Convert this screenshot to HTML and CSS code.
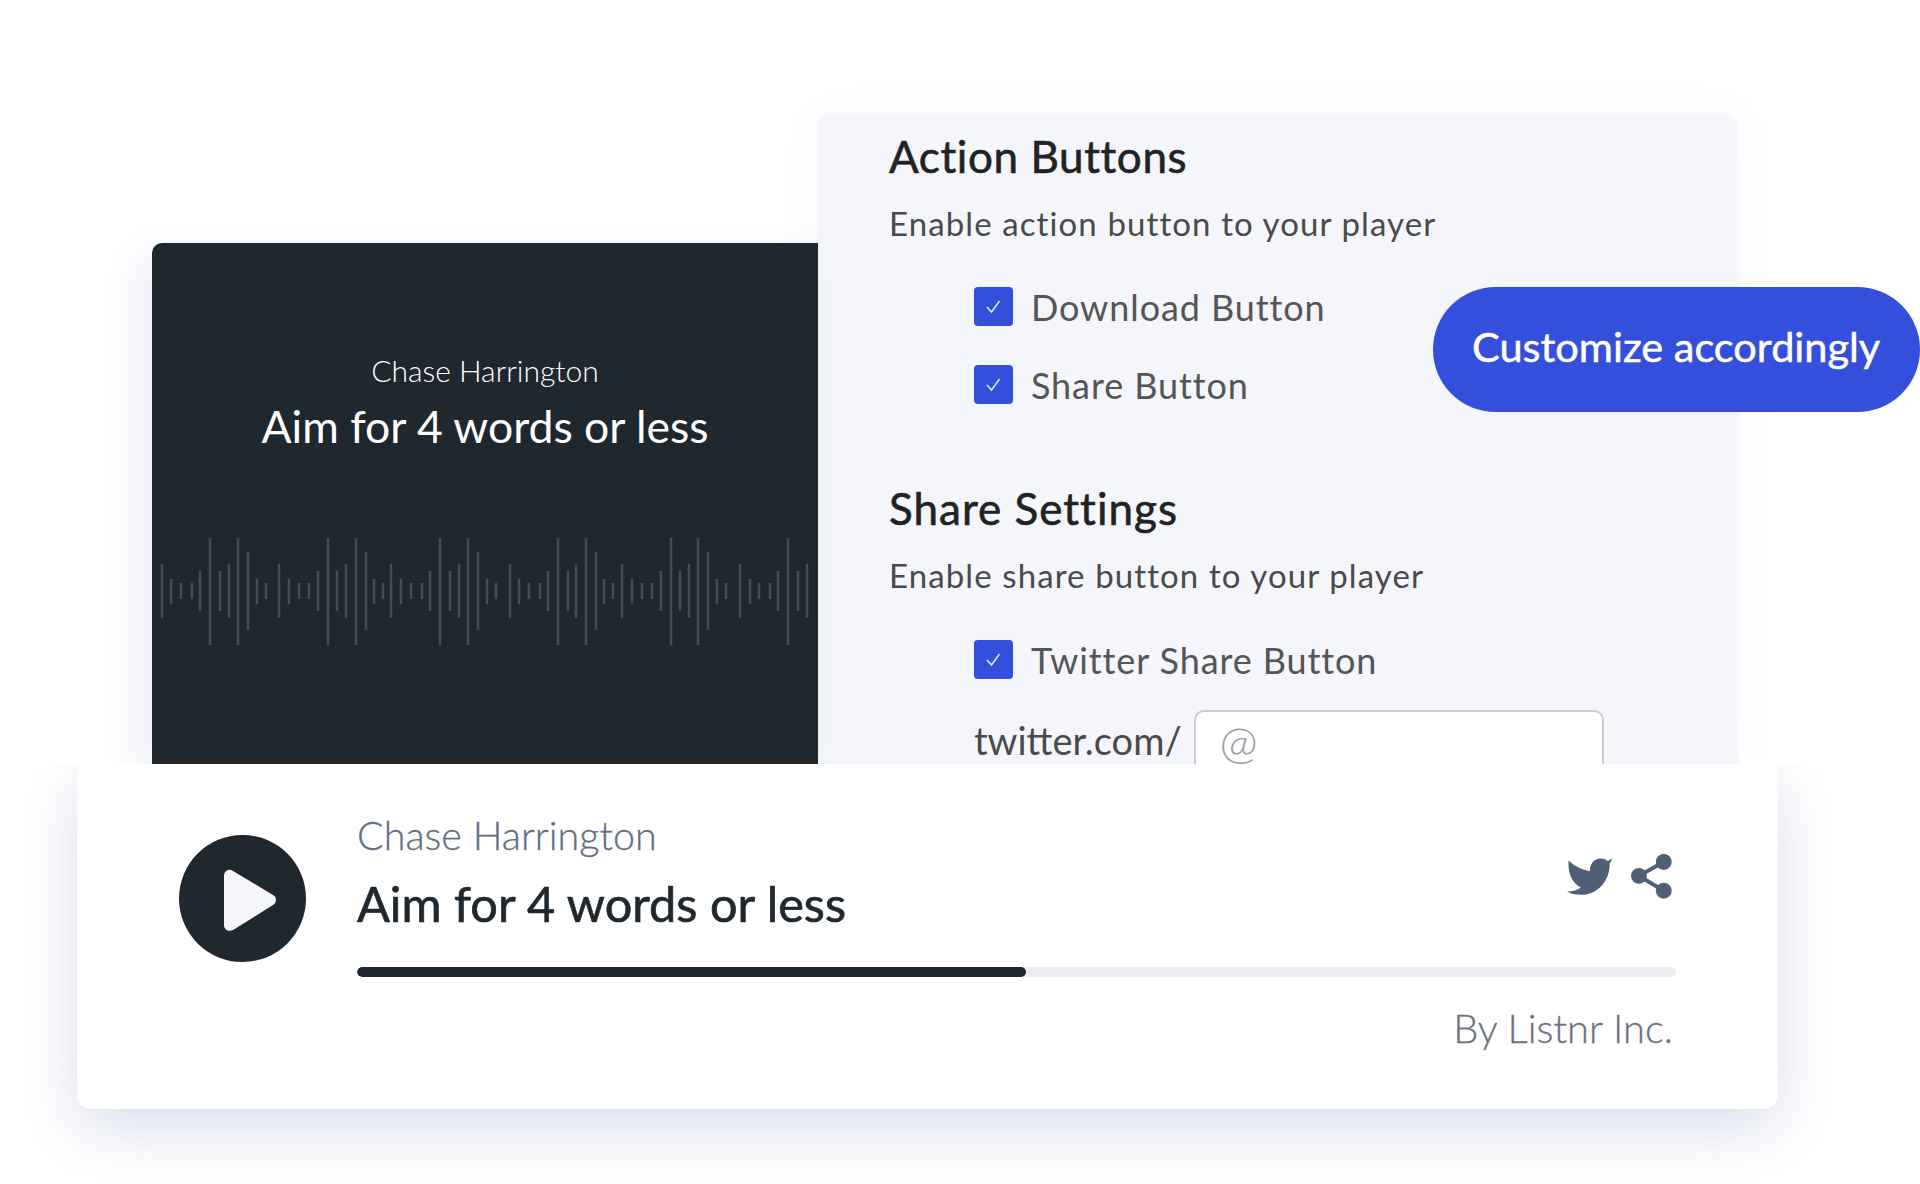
FILE: index.html
```html
<!DOCTYPE html>
<html lang="en">
<head>
  <meta charset="UTF-8">
  <title>Listnr Player</title>
  <link rel="stylesheet" href="styles.css">
</head>
<body>

  <div class="stage">
    <div class="top-row">
      <div class="cover">
        <div class="cover-name">Chase Harrington</div>
        <div class="cover-title">Aim for 4 words or less</div>
        <svg class="wave" viewBox="0 0 666 120" width="666" height="120">
          <path d="M10 33v54M19 48v25M29 52v16M40 52v16M48 40v40M58 7v107M68 40v40M77 33v54M86 7v107M96 21v78M105 48v25M114 52v16M127 33v54M137 48v25M147 52v16M157 52v16M166 40v40M176 7v107M185 40v40M194 33v54M204 7v107M214 21v78M222 48v25M231 52v16M239 33v54M249 48v25M259 52v16M270 52v16M278 40v40M288 7v107M298 40v40M307 33v54M316 7v107M326 21v78M335 48v25M344 52v16M358 33v54M367 48v25M377 52v16M388 52v16M396 40v40M406 7v107M416 40v40M424 33v54M434 7v107M444 21v78M452 48v25M461 52v16M470 33v54M480 48v25M490 52v16M500 52v16M509 40v40M519 7v107M528 40v40M537 33v54M546 7v107M556 21v78M565 48v25M574 52v16M588 33v54M598 48v25M607 52v16M618 52v16M626 40v40M636 7v107M646 40v40M655 33v54"/>
        </svg>
      </div>

      <div class="settings">
        <h2>Action Buttons</h2>
        <p class="desc">Enable action button to your player</p>
        <div class="check-row first">
          <span class="check"><svg viewBox="0 0 39 39"><path d="M13 20l4.500 5 8-11"/></svg></span>
          <span>Download Button</span>
        </div>
        <div class="check-row">
          <span class="check"><svg viewBox="0 0 39 39"><path d="M13 20l4.500 5 8-11"/></svg></span>
          <span>Share Button</span>
        </div>

        <h2 class="second">Share Settings</h2>
        <p class="desc">Enable share button to your player</p>
        <div class="check-row first">
          <span class="check"><svg viewBox="0 0 39 39"><path d="M13 20l4.500 5 8-11"/></svg></span>
          <span>Twitter Share Button</span>
        </div>
        <div class="handle-row">
          <label for="handle">twitter.com/</label>
          <input type="text" id="handle" placeholder="@">
        </div>
      </div>
    </div>

    <div class="player">
      <div class="play">
        <svg viewBox="0 0 127 127" width="127" height="127">
          <path d="M45 41c0-5 5-8 9-5l40 24c4 2 4 7 0 10l-40 25c-4 2-9 0-9-5z"/>
        </svg>
      </div>
      <div class="player-body">
        <div class="player-head">
          <div>
            <div class="player-name">Chase Harrington</div>
            <div class="player-title">Aim for 4 words or less</div>
          </div>
          <div class="player-icons">
            <svg class="bird" viewBox="200 105 145 123" width="48" height="41">
              <path d="M208 118C225 135 250 147 272 150C272 128 285 112 305 112C315 112 322 116 326 120L340 112L332 128C333 175 300 222 245 222C228 222 212 218 203 212C220 212 235 208 245 200C215 185 205 150 208 118z"/>
            </svg>
            <svg class="share" viewBox="388 97 130 140" width="43" height="47">
              <path class="share-line" d="M490 123L415 165L490 210"/>
              <circle cx="490" cy="123" r="24"/>
              <circle cx="415" cy="165" r="24"/>
              <circle cx="490" cy="210" r="24"/>
            </svg>
          </div>
        </div>
        <div class="progress"><div class="progress-fill"></div></div>
        <div class="byline">By Listnr Inc.</div>
      </div>
    </div>

    <div class="pill">Customize accordingly</div>
  </div>

</body>
</html>
```

FILE: styles.css
```css
* {
  box-sizing: border-box;
}
body {
  margin: 0;
  background: #fff;
  font-family: 'Lato', sans-serif;
}

.stage {
  position: relative;
  width: 1920px;
  height: 1184px;
  padding-top: 115px;
  overflow: hidden;
}

.top-row {
  display: flex;
  align-items: flex-end;
  height: 649px;
  margin-left: 152px;
}

/* dark cover */
.cover {
  position: relative;
  z-index: 1;
  width: 666px;
  height: 521px;
  padding-top: 109px;
  background: #1f272f;
  border-radius: 10px 0 0 0;
  color: #fff;
  text-align: center;
  box-shadow: -14px 10px 40px rgba(70, 90, 170, 0.1);
}
.cover-name {
  font-size: 30px;
  font-weight: 300;
  line-height: 36px;
}
.cover-title {
  margin-top: 10px;
  font-size: 44.500px;
  font-weight: 400;
  line-height: 56px;
}
.wave {
  display: block;
  margin-top: 77px;
}
.wave path {
  fill: none;
  stroke: #484d54;
  stroke-width: 2.500;
}

/* settings panel */
.settings {
  width: 921px;
  height: 649px;
  padding: 11px 0 0 71px;
  background: #f4f6fb;
  border-radius: 12px 14px 0 0;
  overflow: hidden;
  color: #4a4a4a;
  box-shadow: 0 0 50px rgba(70, 90, 170, 0.05);
}
.settings h2 {
  margin: 0;
  height: 60px;
  color: #222;
  font-size: 44px;
  font-weight: 400;
  line-height: 60px;
  letter-spacing: 0.600px;
  -webkit-text-stroke: 0.600px #222;
}
.settings h2.second {
  margin-top: 74px;
  letter-spacing: 1px;
}
.desc {
  margin: 17px 0 0;
  height: 40px;
  font-size: 33px;
  line-height: 40px;
  letter-spacing: 1.100px;
}
.check-row {
  display: flex;
  align-items: center;
  gap: 18px;
  height: 39px;
  margin: 39px 0 0 85px;
  font-size: 36px;
  color: #555;
  letter-spacing: 0.900px;
}
.check-row.first {
  margin-top: 44px;
}
.second + .desc + .check-row.first {
  margin-top: 45px;
}
.check {
  display: block;
  width: 39px;
  height: 39px;
  background: #344fdb;
  border-radius: 4px;
}
.check svg {
  display: block;
}
.check path {
  fill: none;
  stroke: #e8ecff;
  stroke-width: 1.500;
}
.handle-row {
  display: flex;
  align-items: flex-start;
  gap: 12px;
  margin: 31px 0 0 85px;
  font-size: 38px;
  color: #4a4a4a;
}
.handle-row label {
  line-height: 60px;
}
.handle-row input {
  width: 410px;
  height: 70px;
  padding: 0 24px 8px;
  background: #fff;
  border: 2px solid #c9ccd1;
  border-radius: 10px;
  font-family: inherit;
  font-size: 46px;
  font-weight: 300;
}
.handle-row input::placeholder {
  color: #9a9ea6;
}

/* player card */
.player {
  position: relative;
  z-index: 2;
  display: flex;
  gap: 51px;
  width: 1701px;
  height: 345px;
  margin-left: 77px;
  padding: 51px 102px 0;
  background: #fff;
  border-radius: 8px 8px 14px 14px;
  box-shadow: 0 20px 60px rgba(70, 90, 170, 0.2);
  clip-path: inset(0 -100px -100px -100px);
}
.play {
  flex: none;
  width: 127px;
  height: 127px;
  margin-top: 20px;
  background: #1f272f;
  border-radius: 50%;
}
.play svg {
  display: block;
}
.play path {
  fill: #f5f6fa;
}
.player-body {
  flex: 1;
}
.player-head {
  display: flex;
  justify-content: space-between;
}
.player-name {
  height: 40px;
  color: #5f6f84;
  font-size: 39.500px;
  font-weight: 300;
  line-height: 40px;
  -webkit-text-stroke: 0.300px #5f6f84;
}
.player-title {
  height: 56px;
  margin-top: 20px;
  color: #1f272f;
  font-size: 48.700px;
  font-weight: 400;
  line-height: 56px;
  -webkit-text-stroke: 0.700px #1f272f;
}
.player-icons {
  display: flex;
  align-items: center;
  gap: 16px;
  height: 47px;
  margin: 38px 3px 0 0;
}
.player-icons svg {
  fill: #4f5f75;
}
.share-line {
  fill: none;
  stroke: #4f5f75;
  stroke-width: 12;
}
.progress {
  height: 10px;
  margin-top: 36px;
  background: #eceef3;
  border-radius: 5px;
  overflow: hidden;
}
.progress-fill {
  width: 669px;
  height: 10px;
  background: #1f272f;
  border-radius: 5px;
}
.byline {
  height: 40px;
  margin-top: 31px;
  padding-right: 3px;
  color: #6b7280;
  font-size: 39.800px;
  font-weight: 300;
  line-height: 40px;
  text-align: right;
  -webkit-text-stroke: 0.300px #6b7280;
}

/* floating label */
.pill {
  position: absolute;
  left: 1433px;
  top: 287px;
  width: 487px;
  height: 125px;
  padding-left: 39px;
  background: #344fdb;
  border-radius: 63px;
  color: #fff;
  font-size: 41.500px;
  font-weight: 400;
  line-height: 119px;
  -webkit-text-stroke: 0.500px #fff;
}
```
